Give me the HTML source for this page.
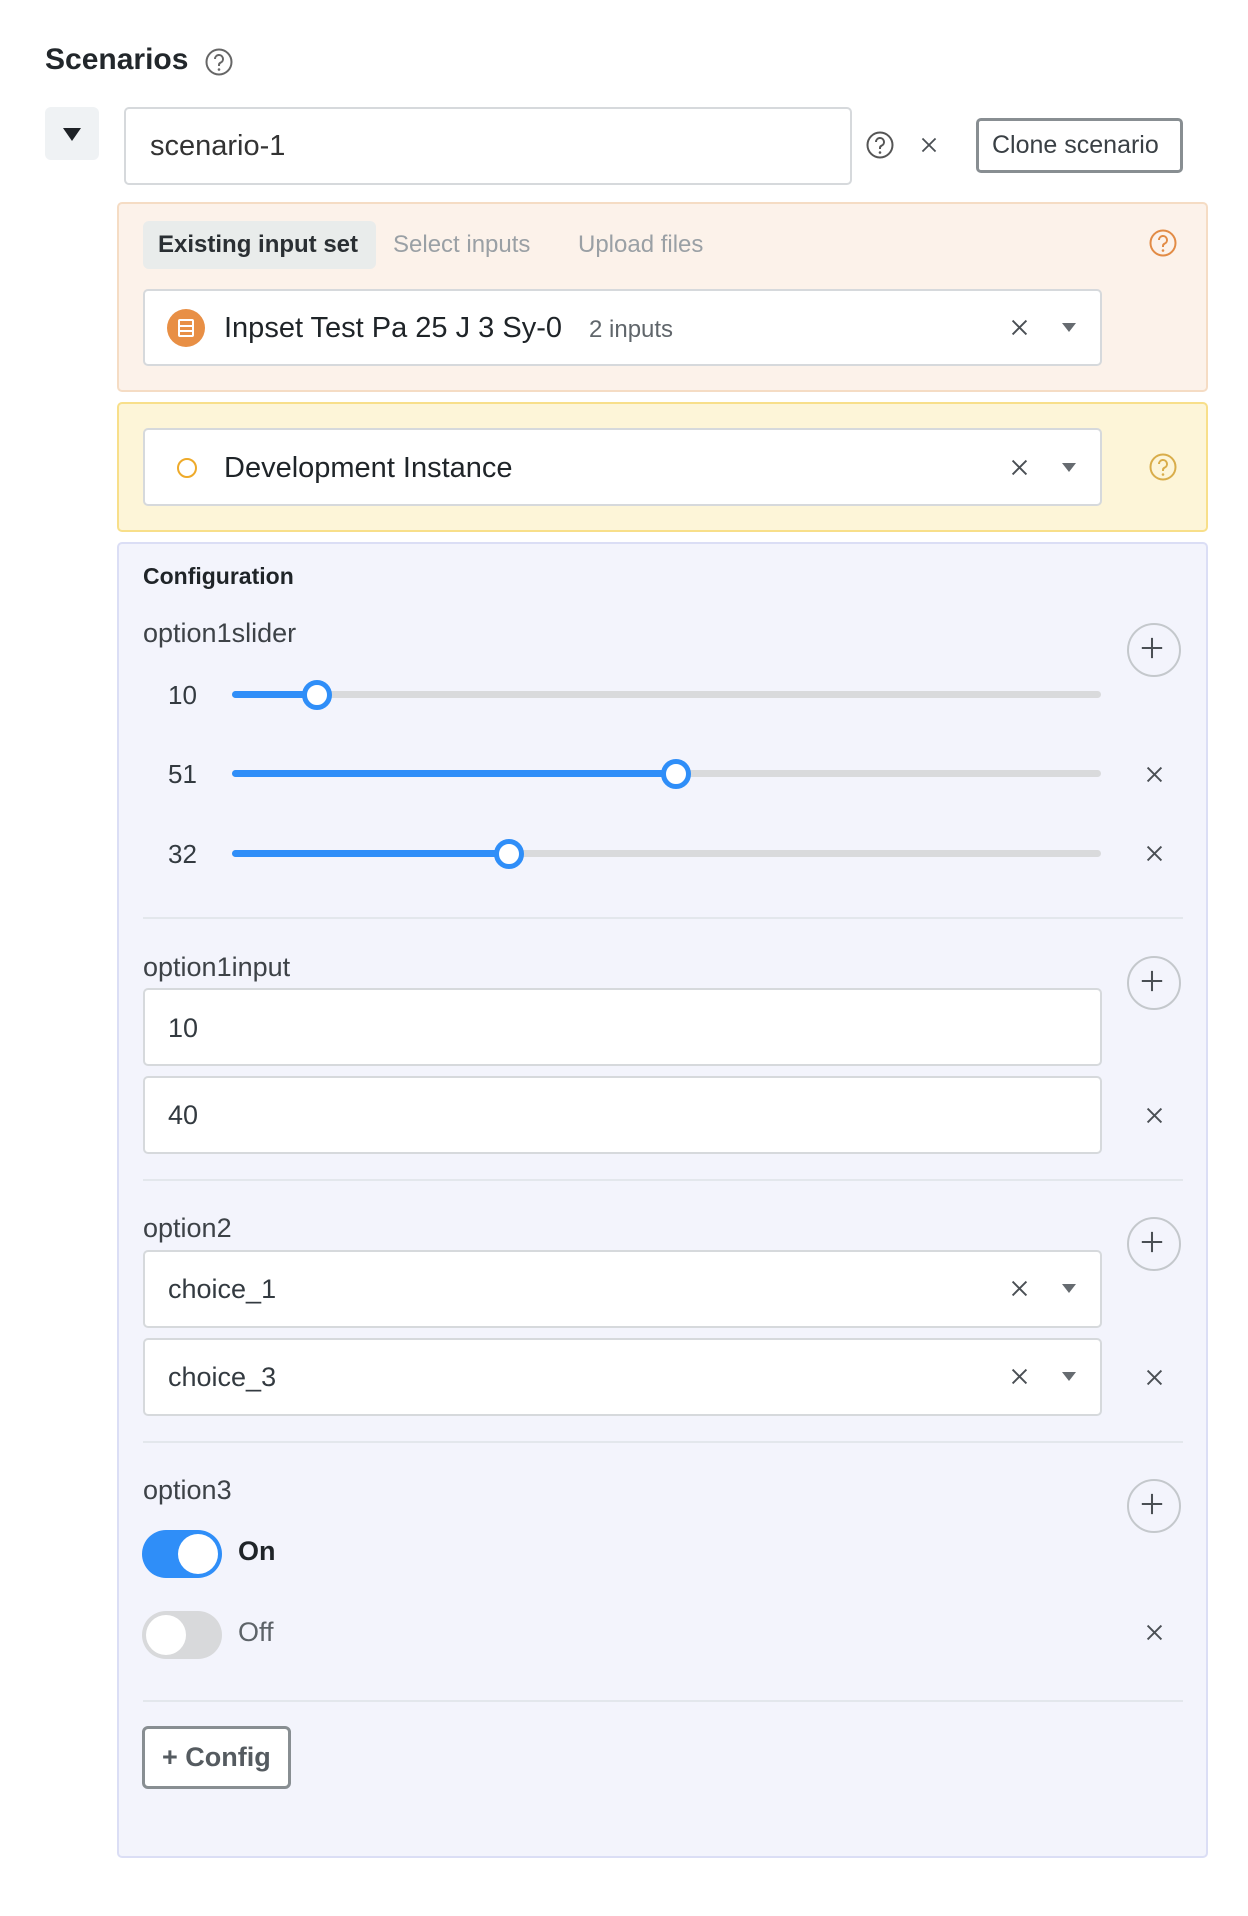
<!DOCTYPE html>
<html><head><meta charset="utf-8"><style>
*{box-sizing:border-box;margin:0;padding:0}
body{width:1248px;height:1916px;background:#fff;font-family:"Liberation Sans",sans-serif;color:#333a40;position:relative;overflow:hidden}
.a{position:absolute}
.t{position:absolute;line-height:1;white-space:nowrap}
.box{position:absolute;background:#fff;border:2px solid #d6d9dc;border-radius:5px}
.x{position:absolute;width:22px;height:22px}
.plus{position:absolute;width:54px;height:54px;border:2px solid #c4c8cc;border-radius:50%}
.track{position:absolute;left:232px;width:869px;height:7px;border-radius:4px;background:#d9dadc}
.fill{position:absolute;left:0;top:0;height:7px;border-radius:4px;background:#2f8ef8}
.thumb{position:absolute;width:30px;height:30px;border:5px solid #2f8ef8;border-radius:50%;background:#fff;top:-11px}
.div{position:absolute;left:143px;width:1040px;height:2px;background:#e3e7ec}
.lbl{font-size:27px;color:#3d4247}
</style></head><body>
<svg width="0" height="0" style="position:absolute"><defs>
<symbol id="x" viewBox="0 0 22 22"><path d="M3 3L19 19M19 3L3 19" stroke="#4a4f54" stroke-width="2.2"/></symbol>
<symbol id="q" viewBox="0 0 28 28"><circle cx="14" cy="14" r="12.5" fill="none" stroke="currentColor" stroke-width="2"/><path d="M10 11a4 4 0 1 1 5.5 3.7c-1 .5-1.5 1.2-1.5 2.3v1" fill="none" stroke="currentColor" stroke-width="2"/><circle cx="14" cy="21.5" r="1.3" fill="currentColor"/></symbol>
<symbol id="p" viewBox="0 0 54 54"><path d="M27 16V38M16 27H38" stroke="#4a4f54" stroke-width="2.2"/></symbol>
</defs></svg>

<div class="t" style="left:45px;top:45px;font-size:30px;font-weight:bold;color:#22272b">Scenarios</div>
<svg class="a" style="left:205px;top:48px;color:#666" width="28" height="28"><use href="#q"/></svg>

<div class="a" style="left:45px;top:107px;width:54px;height:53px;background:#eff2f4;border-radius:6px"></div>
<svg class="a" style="left:63px;top:128px" width="18" height="14"><path d="M0 0H18L9 13Z" fill="#1e2226"/></svg>
<div class="box" style="left:124px;top:107px;width:728px;height:78px"></div>
<div class="t" style="left:150px;top:132px;font-size:29px;color:#333">scenario-1</div>
<svg class="a" style="left:866px;top:131px;color:#555" width="28" height="28"><use href="#q"/></svg>
<svg class="x" style="left:920px;top:136px;width:18px;height:18px"><use href="#x"/></svg>
<div class="a" style="left:976px;top:118px;width:207px;height:55px;border:3px solid #888e92;border-radius:5px"></div>
<div class="t" style="left:992px;top:133px;font-size:25px;color:#3a4045">Clone scenario</div>

<!-- orange panel -->
<div class="a" style="left:117px;top:202px;width:1091px;height:190px;background:#fcf2ea;border:2px solid #f5dcc4;border-radius:5px"></div>
<div class="a" style="left:143px;top:221px;width:233px;height:48px;background:#e9eceb;border-radius:6px"></div>
<div class="t" style="left:158px;top:233px;font-size:24px;font-weight:bold;color:#2a2f33">Existing input set</div>
<div class="t" style="left:393px;top:233px;font-size:24px;color:#9aa0a5">Select inputs</div>
<div class="t" style="left:578px;top:233px;font-size:24px;color:#9aa0a5">Upload files</div>
<svg class="a" style="left:1149px;top:229px;color:#e28b45" width="28" height="28"><use href="#q"/></svg>
<div class="box" style="left:143px;top:289px;width:959px;height:77px"></div>
<div class="a" style="left:167px;top:309px;width:38px;height:38px;border-radius:50%;background:#e88f45"></div>
<div class="a" style="left:178px;top:319px;width:16px;height:18px;border:2px solid #fff;border-radius:2px;background:linear-gradient(#fff,#fff) 0 4px/100% 2px no-repeat,linear-gradient(#fff,#fff) 0 9px/100% 2px no-repeat"></div>
<div class="t" style="left:224px;top:314px;font-size:29px;color:#1f2428">Inpset Test Pa 25 J 3 Sy-0</div>
<div class="t" style="left:589px;top:318px;font-size:24px;color:#60666b">2 inputs</div>
<svg class="x" style="left:1010px;top:318px;width:19px;height:19px"><use href="#x"/></svg>
<svg class="a" style="left:1062px;top:323px" width="14" height="10"><path d="M0 0H14L7 9Z" fill="#666b70"/></svg>

<!-- yellow panel -->
<div class="a" style="left:117px;top:402px;width:1091px;height:130px;background:#fdf5d8;border:2px solid #f8df8a;border-radius:5px"></div>
<div class="box" style="left:143px;top:428px;width:959px;height:78px"></div>
<div class="a" style="left:177px;top:458px;width:20px;height:20px;border:2.5px solid #eeaa2a;border-radius:50%"></div>
<div class="t" style="left:224px;top:454px;font-size:29px;color:#1f2428">Development Instance</div>
<svg class="x" style="left:1010px;top:458px;width:19px;height:19px"><use href="#x"/></svg>
<svg class="a" style="left:1062px;top:463px" width="14" height="10"><path d="M0 0H14L7 9Z" fill="#666b70"/></svg>
<svg class="a" style="left:1149px;top:453px;color:#d9ad4a" width="28" height="28"><use href="#q"/></svg>

<!-- config panel -->
<div class="a" style="left:117px;top:542px;width:1091px;height:1316px;background:#f3f4fc;border:2px solid #dbdef5;border-radius:5px"></div>
<div class="t" style="left:143px;top:565px;font-size:23px;font-weight:bold;color:#1f2428">Configuration</div>

<div class="t lbl" style="left:143px;top:620px">option1slider</div>
<div class="plus" style="left:1127px;top:623px"><svg width="50" height="50" viewBox="2 2 50 50"><use href="#p"/></svg></div>
<div class="t" style="left:168px;top:682px;font-size:26px">10</div>
<div class="track" style="top:691px"><div class="fill" style="width:85px"></div><div class="thumb" style="left:70px"></div></div>
<div class="t" style="left:168px;top:761px;font-size:26px">51</div>
<div class="track" style="top:770px"><div class="fill" style="width:444px"></div><div class="thumb" style="left:429px"></div></div>
<svg class="x" style="left:1145px;top:765px;width:19px;height:19px"><use href="#x"/></svg>
<div class="t" style="left:168px;top:841px;font-size:26px">32</div>
<div class="track" style="top:850px"><div class="fill" style="width:277px"></div><div class="thumb" style="left:262px"></div></div>
<svg class="x" style="left:1145px;top:844px;width:19px;height:19px"><use href="#x"/></svg>
<div class="div" style="top:917px"></div>

<div class="t lbl" style="left:143px;top:954px">option1input</div>
<div class="plus" style="left:1127px;top:956px"><svg width="50" height="50" viewBox="2 2 50 50"><use href="#p"/></svg></div>
<div class="box" style="left:143px;top:988px;width:959px;height:78px"></div>
<div class="t" style="left:168px;top:1015px;font-size:27px">10</div>
<div class="box" style="left:143px;top:1076px;width:959px;height:78px"></div>
<div class="t" style="left:168px;top:1102px;font-size:27px">40</div>
<svg class="x" style="left:1145px;top:1106px;width:19px;height:19px"><use href="#x"/></svg>
<div class="div" style="top:1179px"></div>

<div class="t lbl" style="left:143px;top:1215px">option2</div>
<div class="plus" style="left:1127px;top:1217px"><svg width="50" height="50" viewBox="2 2 50 50"><use href="#p"/></svg></div>
<div class="box" style="left:143px;top:1250px;width:959px;height:78px"></div>
<div class="t" style="left:168px;top:1276px;font-size:27px">choice_1</div>
<svg class="x" style="left:1010px;top:1279px;width:19px;height:19px"><use href="#x"/></svg>
<svg class="a" style="left:1062px;top:1284px" width="14" height="10"><path d="M0 0H14L7 9Z" fill="#666b70"/></svg>
<div class="box" style="left:143px;top:1338px;width:959px;height:78px"></div>
<div class="t" style="left:168px;top:1364px;font-size:27px">choice_3</div>
<svg class="x" style="left:1010px;top:1367px;width:19px;height:19px"><use href="#x"/></svg>
<svg class="a" style="left:1062px;top:1372px" width="14" height="10"><path d="M0 0H14L7 9Z" fill="#666b70"/></svg>
<svg class="x" style="left:1145px;top:1368px;width:19px;height:19px"><use href="#x"/></svg>
<div class="div" style="top:1441px"></div>

<div class="t lbl" style="left:143px;top:1477px">option3</div>
<div class="plus" style="left:1127px;top:1479px"><svg width="50" height="50" viewBox="2 2 50 50"><use href="#p"/></svg></div>
<div class="a" style="left:142px;top:1530px;width:80px;height:48px;border-radius:24px;background:#2f8ef8"></div>
<div class="a" style="left:178px;top:1534px;width:40px;height:40px;border-radius:50%;background:#fff"></div>
<div class="t" style="left:238px;top:1538px;font-size:27px;font-weight:bold;color:#1f2428">On</div>
<div class="a" style="left:142px;top:1611px;width:80px;height:48px;border-radius:24px;background:#d8d9db"></div>
<div class="a" style="left:146px;top:1615px;width:40px;height:40px;border-radius:50%;background:#fff"></div>
<div class="t" style="left:238px;top:1619px;font-size:27px;color:#5d6368">Off</div>
<svg class="x" style="left:1145px;top:1623px;width:19px;height:19px"><use href="#x"/></svg>
<div class="div" style="top:1700px"></div>

<div class="a" style="left:142px;top:1726px;width:149px;height:63px;border:3px solid #888e92;border-radius:6px;background:#fff"></div>
<div class="t" style="left:162px;top:1744px;font-size:27px;font-weight:bold;color:#555b60">+ Config</div>
</body></html>
